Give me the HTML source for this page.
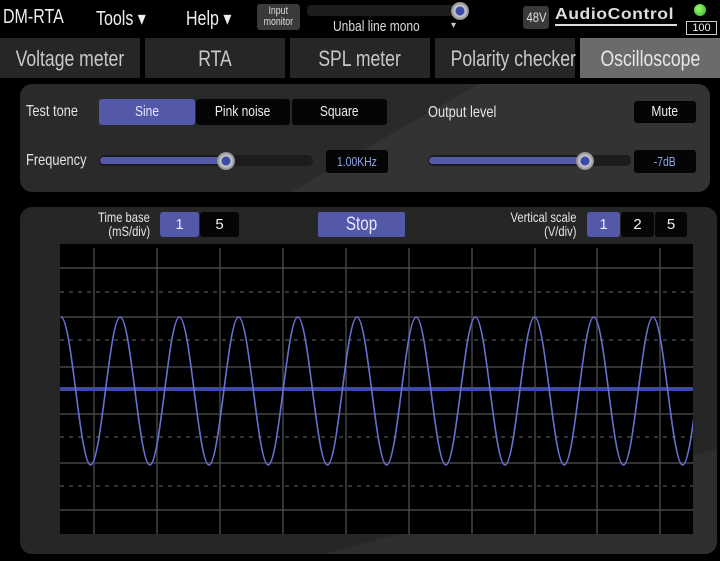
<!DOCTYPE html>
<html><head><style>
*{margin:0;padding:0;box-sizing:border-box}
body{width:720px;height:561px;background:#000;position:relative;overflow:hidden;font-family:"Liberation Sans",sans-serif;color:#ddd}
.a{position:absolute}
.n{display:inline-block;transform:scaleX(.8);transform-origin:center;white-space:nowrap}
.l{transform-origin:left}
.r{transform-origin:right}
.tab{position:absolute;top:38px;height:40px;width:140px;background:#262626;color:#c8c8c8;font-size:22px;text-align:center;line-height:42px}
.btn{position:absolute;background:#050505;color:#eee;font-size:15px;text-align:center;border-radius:3px}
.sel{background:#5358a8;color:#e8e8ff}
.lbl{position:absolute;font-size:16px;color:#e4e4e4}
.knob{position:absolute;width:18px;height:18px;border-radius:50%;background:radial-gradient(circle,#3a4aa8 0 4px,#ccc 5px,#888 9px)}
</style></head><body>
<div class="a" style="left:3px;top:6px;font-size:20px;color:#eee"><span class="n l">DM-RTA</span></div>
<div class="a" style="left:96px;top:6px;font-size:20px;color:#eee"><span class="n l">Tools ▾</span></div>
<div class="a" style="left:186px;top:6px;font-size:20px;color:#eee"><span class="n l">Help ▾</span></div>
<div class="a" style="left:257px;top:4px;width:43px;height:26px;background:#3a3a3a;border-radius:3px;font-size:11px;line-height:11px;text-align:center;padding-top:2px;color:#ddd"><span class="n">Input</span><br><span class="n">monitor</span></div>
<div class="a" style="left:307px;top:5px;width:157px;height:11px;background:#1c1c1c;border-radius:4px"></div>
<div class="knob" style="left:451px;top:2px"></div>
<div class="a" style="left:333px;top:18px;font-size:15px;color:#ddd"><span class="n l">Unbal line mono</span></div>
<div class="a" style="left:451px;top:20px;font-size:10px;color:#ccc">▾</div>
<div class="a" style="left:523px;top:6px;width:26px;height:23px;background:#3a3a3a;border-radius:3px;font-size:14px;line-height:23px;text-align:center"><span class="n">48V</span></div>
<div class="a" style="left:555px;top:6px;font-weight:bold;font-size:16px;color:#ddd;letter-spacing:0.5px;border-bottom:2px solid #ddd;line-height:18px;width:122px"><span style="display:inline-block;transform:scaleX(1.1);transform-origin:left">AudioControl</span></div>
<div class="a" style="left:694px;top:4px;width:12px;height:12px;border-radius:50%;background:radial-gradient(circle at 40% 40%,#9f6,#3a3)"></div>
<div class="a" style="left:686px;top:21px;width:31px;height:14px;border:1px solid #ccc;font-size:11px;line-height:12px;text-align:center;color:#eee">100</div>
<div class="tab" style="left:0"><span class="n">Voltage meter</span></div>
<div class="tab" style="left:145px"><span class="n">RTA</span></div>
<div class="tab" style="left:290px"><span class="n">SPL meter</span></div>
<div class="tab" style="left:435px"><span class="n">Polarity checker</span></div>
<div class="tab" style="left:580px;background:#6b6b6b;color:#e6e6e6"><span class="n">Oscilloscope</span></div>

<div class="a" style="left:20px;top:84px;width:690px;height:108px;border-radius:12px;background:linear-gradient(150deg,#2a2a2a 0 52%,#333 52.5%)"></div>
<div class="lbl" style="left:26px;top:103px"><span class="n l">Test tone</span></div>
<div class="btn sel" style="left:99px;top:99px;width:96px;height:26px;line-height:26px"><span class="n">Sine</span></div>
<div class="btn" style="left:196px;top:99px;width:94px;height:26px;line-height:26px"><span class="n">Pink noise</span></div>
<div class="btn" style="left:292px;top:99px;width:95px;height:26px;line-height:26px"><span class="n">Square</span></div>
<div class="lbl" style="left:428px;top:104px"><span class="n l">Output level</span></div>
<div class="btn" style="left:634px;top:101px;width:62px;height:22px;line-height:22px"><span class="n">Mute</span></div>
<div class="lbl" style="left:26px;top:152px"><span class="n l">Frequency</span></div>
<div class="a" style="left:99px;top:155px;width:214px;height:11px;background:#1c1c1c;border-radius:5px"></div>
<div class="a" style="left:100px;top:157px;width:128px;height:7px;background:#5358a8;border-radius:4px"></div>
<div class="knob" style="left:217px;top:152px"></div>
<div class="btn" style="left:326px;top:150px;width:62px;height:23px;line-height:23px;font-size:13px;color:#8fa4e8"><span class="n">1.00KHz</span></div>
<div class="a" style="left:428px;top:155px;width:203px;height:11px;background:#1c1c1c;border-radius:5px"></div>
<div class="a" style="left:429px;top:157px;width:158px;height:7px;background:#5358a8;border-radius:4px"></div>
<div class="knob" style="left:576px;top:152px"></div>
<div class="btn" style="left:634px;top:150px;width:62px;height:23px;line-height:23px;font-size:13px;color:#8fa4e8"><span class="n">-7dB</span></div>

<div class="a" style="left:20px;top:207px;width:697px;height:347px;border-radius:12px;background:linear-gradient(165deg,#262626 0 80%,#2e2e2e 80.5%)"></div>
<div class="a" style="left:60px;top:210px;width:90px;font-size:14px;line-height:14px;text-align:right;color:#e4e4e4"><span class="n r">Time base</span><br><span class="n r">(mS/div)</span></div>
<div class="btn sel" style="left:160px;top:212px;width:39px;height:25px;line-height:25px">1</div>
<div class="btn" style="left:200px;top:212px;width:39px;height:25px;line-height:25px">5</div>
<div class="btn sel" style="left:318px;top:212px;width:87px;height:25px;line-height:25px;font-size:19px;border-radius:2px"><span class="n">Stop</span></div>
<div class="a" style="left:470px;top:210px;width:106px;font-size:14px;line-height:14px;text-align:right;color:#e4e4e4"><span class="n r">Vertical scale</span><br><span class="n r">(V/div)</span></div>
<div class="btn sel" style="left:587px;top:212px;width:33px;height:25px;line-height:25px">1</div>
<div class="btn" style="left:621px;top:212px;width:33px;height:25px;line-height:25px">2</div>
<div class="btn" style="left:655px;top:212px;width:32px;height:25px;line-height:25px">5</div>

<svg class="a" style="left:60px;top:244px" width="633" height="290" viewBox="60 244 633 290">
<rect x="60" y="244" width="633" height="290" fill="#000"/>
<g stroke="#444" stroke-width="1.5">
<path d="M94 248V534M157 248V534M220 248V534M283 248V534M346 248V534M409 248V534M472 248V534M535 248V534M597 248V534M660 248V534"/>
<path d="M60 268H693M60 317H693M60 367H693M60 414H693M60 463H693M60 510H693"/>
<path stroke-dasharray="4 5" d="M60 292H693M60 340H693M60 437H693M60 486H693"/>
</g>
<path d="M60 389H693" stroke="#3d4aa5" stroke-width="4"/>
<path fill="none" stroke="#6870d0" stroke-width="1.6" d="M61 317c10.75 0 18.85 148 29.6 148s18.85-148 29.6-148s18.85 148 29.6 148s18.85-148 29.6-148s18.85 148 29.6 148s18.85-148 29.6-148s18.85 148 29.6 148s18.85-148 29.6-148s18.85 148 29.6 148s18.85-148 29.6-148s18.85 148 29.6 148s18.85-148 29.6-148s18.85 148 29.6 148s18.85-148 29.6-148s18.85 148 29.6 148s18.85-148 29.6-148s18.85 148 29.6 148s18.85-148 29.6-148s18.85 148 29.6 148s18.85-148 29.6-148s18.85 148 29.6 148s18.85-148 29.6-148s18.85 148 29.6 148"/>
</svg>
</body></html>
